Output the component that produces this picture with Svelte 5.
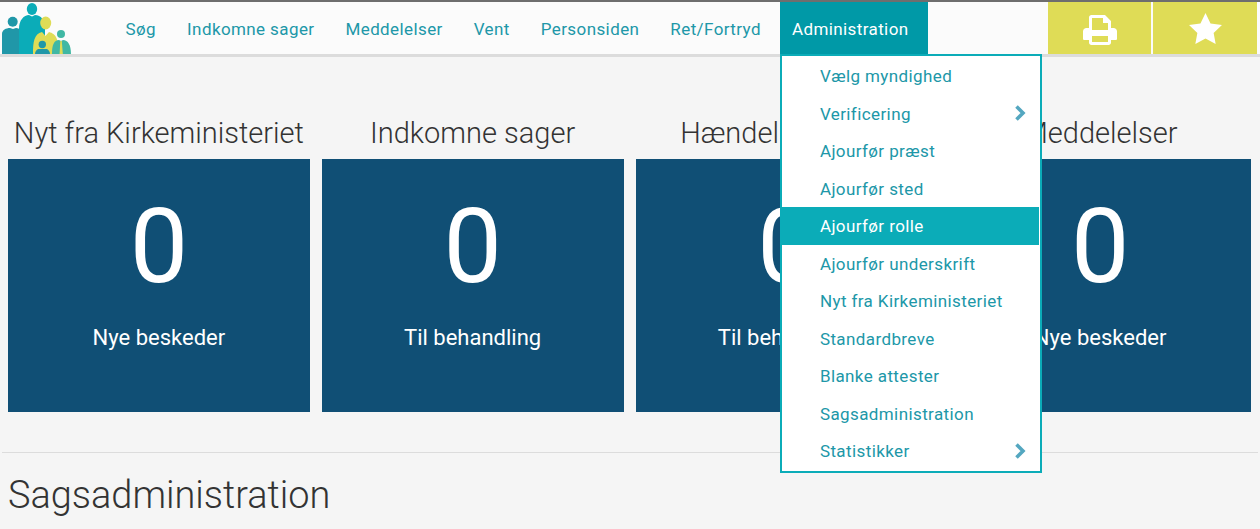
<script>
  const navItems = ['Søg', 'Indkomne sager', 'Meddelelser', 'Vent', 'Personsiden', 'Ret/Fortryd'];
  const cards = [
    { title: 'Nyt fra Kirkeministeriet', count: 0, label: 'Nye beskeder' },
    { title: 'Indkomne sager', count: 0, label: 'Til behandling' },
    { title: 'Hændelsesbreve', count: 0, label: 'Til behandling' },
    { title: 'Meddelelser', count: 0, label: 'Nye beskeder' }
  ];
  const menu = [
    { label: 'Vælg myndighed' },
    { label: 'Verificering', sub: true },
    { label: 'Ajourfør præst' },
    { label: 'Ajourfør sted' },
    { label: 'Ajourfør rolle', active: true },
    { label: 'Ajourfør underskrift' },
    { label: 'Nyt fra Kirkeministeriet' },
    { label: 'Standardbreve' },
    { label: 'Blanke attester' },
    { label: 'Sagsadministration' },
    { label: 'Statistikker', sub: true }
  ];
</script>

<header class="topbar">
  <svg class="logo" width="72" height="52" viewBox="0 2 72 52">
    <circle cx="12.700" cy="21.700" r="5" fill="#2097a8" />
    <path d="M2 54V34c0-4 4-6 8-6l3 1 3-1c2 0 4 1 5 3v23z" fill="#2097a8" />
    <ellipse cx="32" cy="9" rx="5.200" ry="6" fill="#0bacb8" />
    <path d="M19 54V29c0-9 5-14 10-14l3 1.500 3-1.500c6 0 10 5 10 13v26z" fill="#0bacb8" />
    <ellipse cx="45.700" cy="23" rx="5.500" ry="6.500" fill="#dfdc56" />
    <path d="M33 54c0-12 1-20 9-22l3.500 4 3.500-4c7 2 9 6 11 22z" fill="#dfdc56" />
    <circle cx="61" cy="34" r="4" fill="#40b8a4" />
    <path d="M52 54c0-9 2-14 7-14l2 1 2-1c5 0 8 5 8 14z" fill="#40b8a4" />
    <path d="M60.300 41h1.500l1 13h-3.200z" fill="#dfdc56" />
    <circle cx="42.300" cy="44.500" r="3.700" fill="#2097a8" />
    <path d="M35 54c0-2 1-4 3-5h9c2 1 3 3 3 5z" fill="#2097a8" />
  </svg>
  <nav class="nav">
    {#each navItems as item}
      <span class="nav-item">{item}</span>
    {/each}
    <div class="nav-item open">
      Administration
      <ul class="dropdown">
        {#each menu as entry}
          <li class:active={entry.active}>
            {entry.label}
            {#if entry.sub}
              <svg class="chevron" width="12" height="16" viewBox="0 0 12 16">
                <path d="M2.500 1.500l6.500 6.500-6.500 6.500" fill="none" stroke="#54a7c0" stroke-width="3.600" />
              </svg>
            {/if}
          </li>
        {/each}
      </ul>
    </div>
  </nav>
  <div class="actions">
    <button class="action print" aria-label="Udskriv">
      <svg width="34" height="30" viewBox="0 0 34 30">
        <path fill="#fff" fill-rule="evenodd" d="M6 2.500C6 1 7 0 8.500 0h13.500l6 6v7h2.500c2 0 3.500 1.500 3.500 3.500v7c0 1-.5 1.500-1.500 1.500h-4.500v2.500c0 1.500-1 2.500-2.500 2.500h-17c-1.500 0-2.500-1-2.500-2.500v-2.500h-4.500c-1 0-1.500-.5-1.500-1.500v-7c0-2 1.500-3.500 3.500-3.500h2.500zM9 3v12h16v-7h-5v-5zM9 21v6h16v-6z" />
      </svg>
    </button>
    <button class="action star" aria-label="Favoritter">
      <svg width="33" height="31" viewBox="0 0 34 32">
        <path fill="#fff" d="M17 0l5.200 10.800 11.800 1.600-8.600 8.200 2.100 11.400-10.500-5.700-10.500 5.700 2.100-11.400-8.600-8.200 11.800-1.600z" />
      </svg>
    </button>
  </div>
</header>

<main>
  <section class="cards">
    {#each cards as card}
      <div class="card-col">
        <h2>{card.title}</h2>
        <div class="card">
          <span class="count">{card.count}</span>
          <span class="label">{card.label}</span>
        </div>
      </div>
    {/each}
  </section>
  <hr />
  <h1>Sagsadministration</h1>
</main>

<style>
  :global(body) {
    background: #f5f5f5;
    font-family: Roboto, sans-serif;
    overflow: hidden;
  }
  .topbar {
    display: flex;
    height: 52px;
    background: #fbfbfb;
    border-top: 2px solid #6e6e6e;
    border-bottom: 3px solid #dcdcdc;
  }
  .logo {
    flex: none;
    display: block;
  }
  .nav {
    display: flex;
    margin-left: 41.6px;
    gap: 7px;
    flex: 1;
  }
  .nav-item {
    position: relative;
    padding: 0 12px;
    line-height: 55px;
    font-size: 17px;
    letter-spacing: 0.4px;
    color: #2097a8;
  }
  .open {
    padding-right: 19px;
    background: #0099a7;
    color: #fff;
  }
  .dropdown {
    position: absolute;
    left: 0;
    top: 52px;
    width: 258px;
    margin: 0;
    padding: 1px 0;
    list-style: none;
    background: #fff;
    border: 2px solid #0bacb8;
    z-index: 2;
  }
  .dropdown li {
    position: relative;
    height: 37.5px;
    padding-left: 38px;
    line-height: 38px;
    color: #2097a8;
  }
  .dropdown li.active {
    margin-right: 1px;
    background: #0bacb8;
    color: #fff;
  }
  .chevron {
    position: absolute;
    right: 14px;
    top: 10.5px;
  }
  .actions {
    display: flex;
    gap: 2px;
    margin-right: 3px;
  }
  .action {
    padding: 0;
    border: 0;
    background: #dfdc56;
    display: flex;
    align-items: center;
    justify-content: center;
  }
  .print {
    width: 103px;
    padding-top: 3px;
  }
  .star {
    width: 104px;
  }
  main {
    padding: 0 9px 0 8px;
  }
  .cards {
    display: grid;
    grid-template-columns: repeat(4, 1fr);
    gap: 12px;
    padding-top: 57px;
  }
  h2 {
    margin: 0 0 8px;
    padding-top: 1px;
    font-size: 29px;
    font-weight: 300;
    line-height: 36px;
    text-align: center;
    color: #333;
    white-space: nowrap;
  }
  .card {
    height: 253px;
    background: #104f75;
    color: #fff;
    display: flex;
    flex-direction: column;
    align-items: center;
  }
  .count {
    margin-top: 27px;
    font-size: 104px;
    font-weight: 400;
    line-height: 122px;
  }
  .label {
    margin-top: 16px;
    font-size: 22px;
    line-height: 28px;
  }
  hr {
    margin: 40px -7px 0 -6px;
    border: 0;
    border-top: 1px solid #dcdcdc;
  }
  h1 {
    margin: 20px 0 0;
    font-size: 37.9px;
    font-weight: 300;
    line-height: 44px;
    color: #333;
  }
</style>
